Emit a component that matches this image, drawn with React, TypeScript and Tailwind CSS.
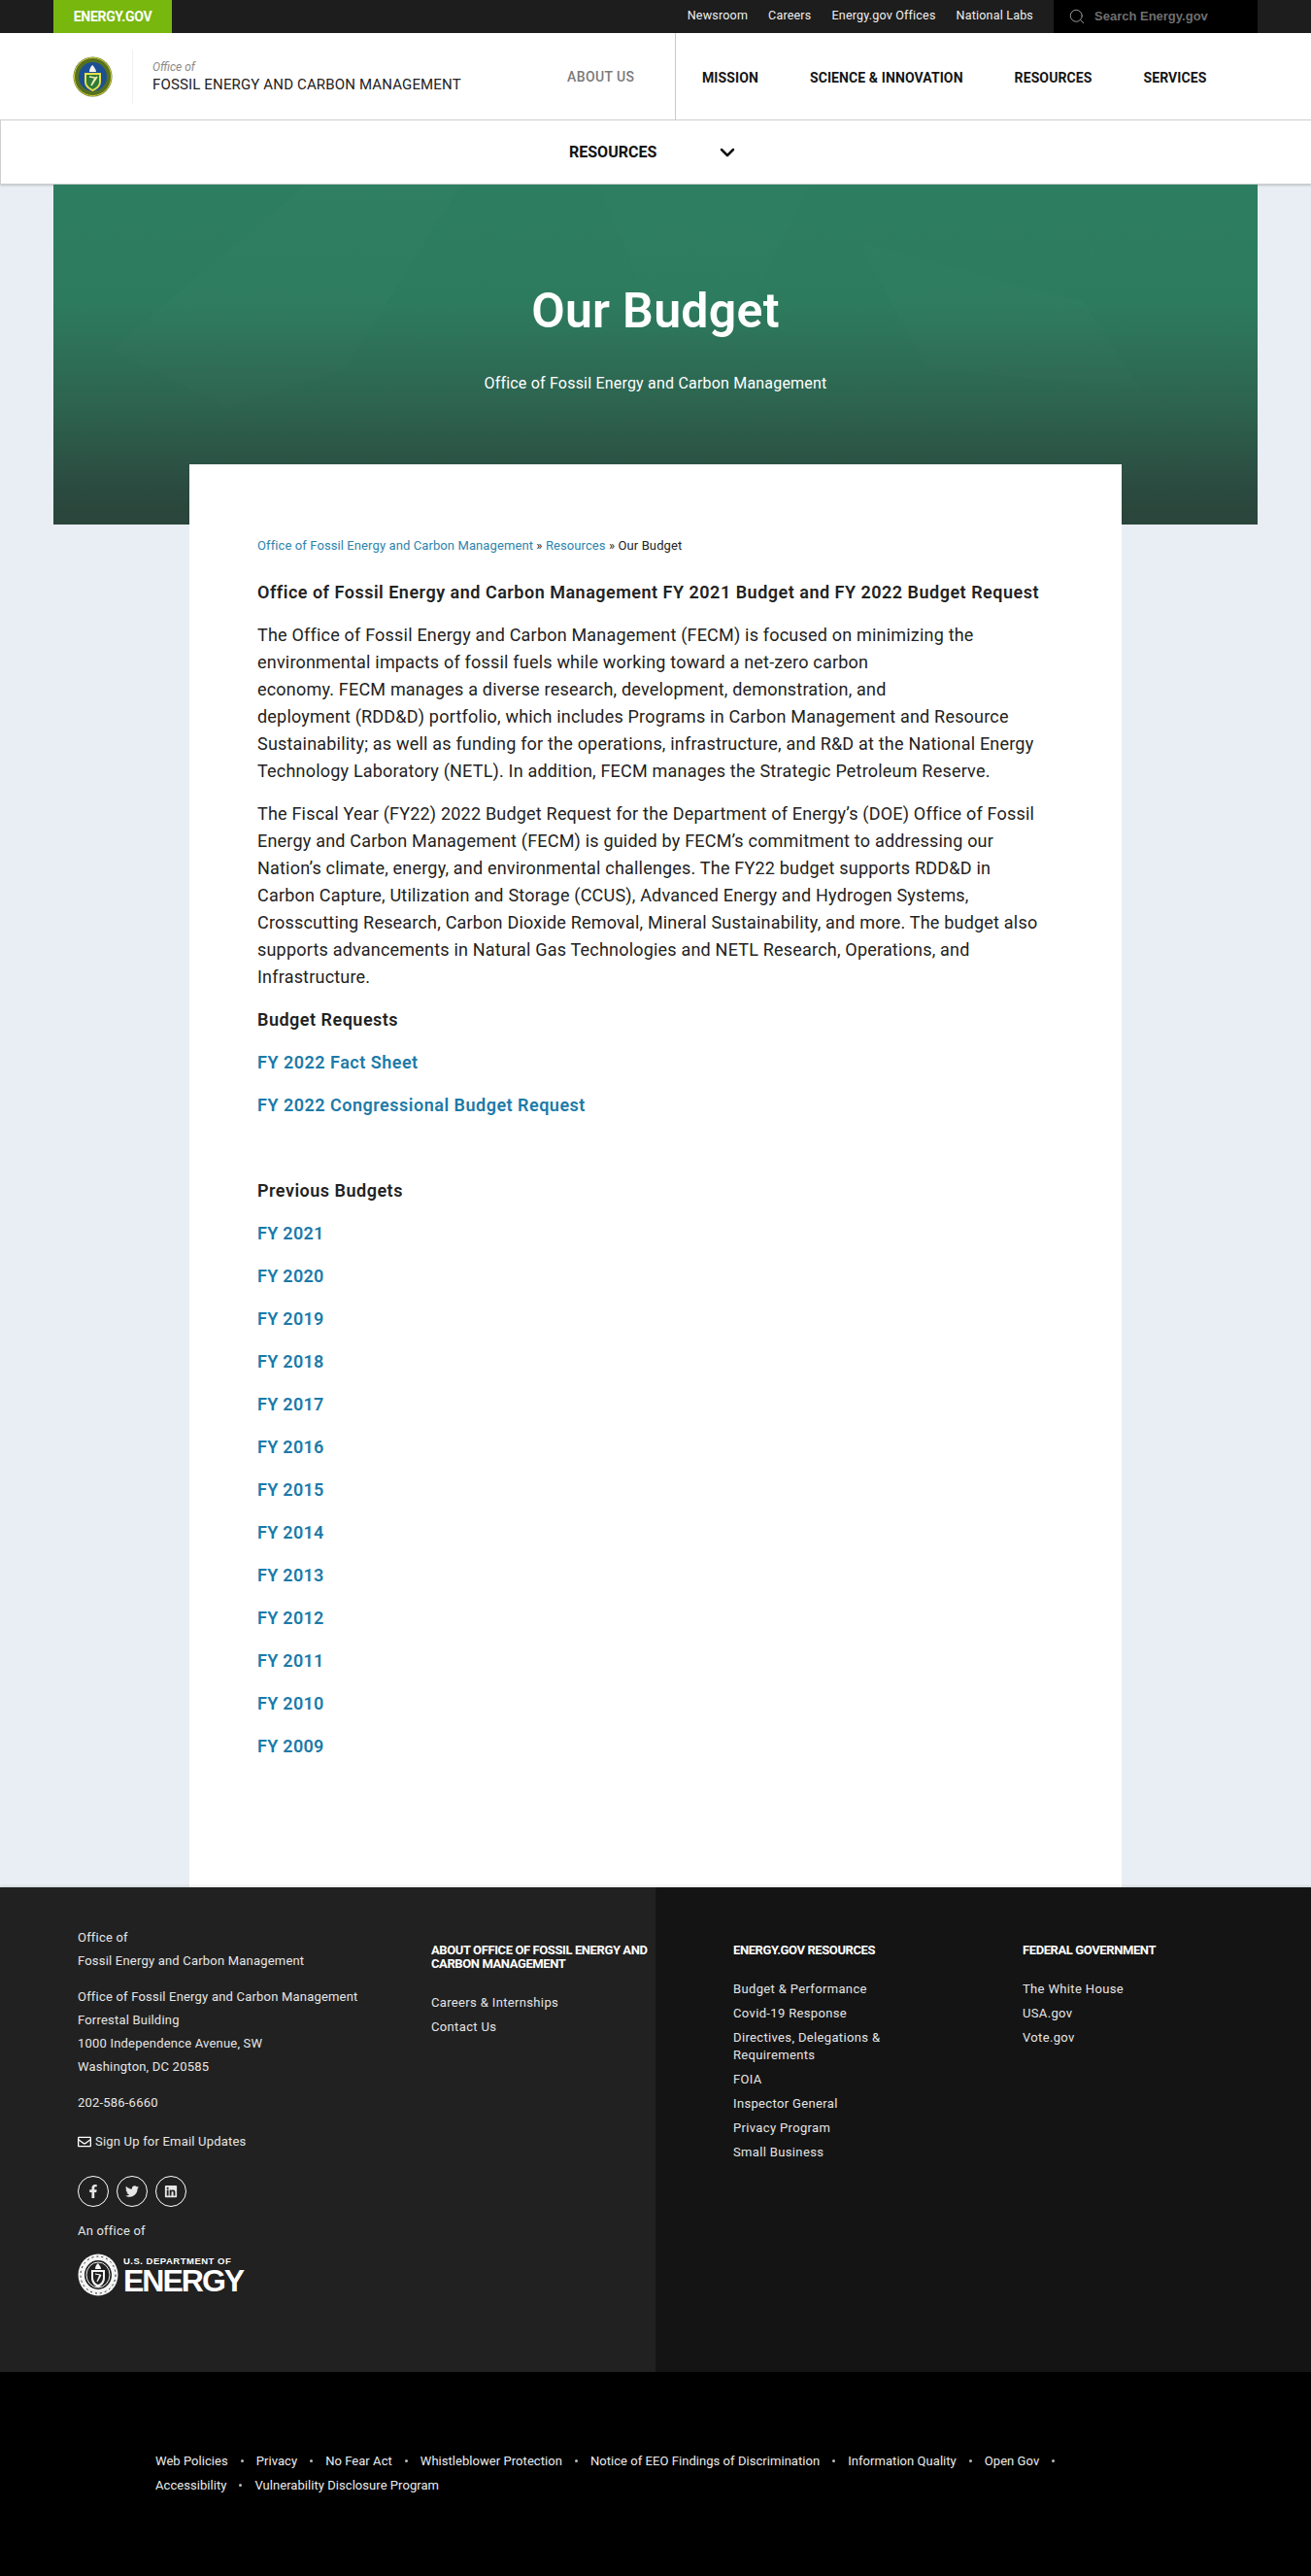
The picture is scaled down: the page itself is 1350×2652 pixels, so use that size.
import React from 'react';
import type { FC } from 'react';
import { ChevronDown, Search } from 'lucide-react';
import { FaFacebookF, FaLinkedin, FaRegEnvelope, FaTwitter } from 'react-icons/fa';

const TOP_LINKS = ['Newsroom', 'Careers', 'Energy.gov Offices', 'National Labs'];
const MAIN_NAV = ['MISSION', 'SCIENCE & INNOVATION', 'RESOURCES', 'SERVICES'];
const YEARS = ['2021', '2020', '2019', '2018', '2017', '2016', '2015', '2014', '2013', '2012', '2011', '2010', '2009'];

const PARA_ONE = [
  'The Office of Fossil Energy and Carbon Management (FECM) is focused on minimizing the',
  'environmental impacts of fossil fuels while working toward a net-zero carbon',
  'economy. FECM manages a diverse research, development, demonstration, and',
  'deployment (RDD&D) portfolio, which includes Programs in Carbon Management and Resource',
  'Sustainability; as well as funding for the operations, infrastructure, and R&D at the National Energy',
  'Technology Laboratory (NETL). In addition, FECM manages the Strategic Petroleum Reserve.',
];
const PARA_TWO = [
  'The Fiscal Year (FY22) 2022 Budget Request for the Department of Energy\u2019s (DOE) Office of Fossil',
  'Energy and Carbon Management (FECM) is guided by FECM\u2019s commitment to addressing our',
  'Nation\u2019s climate, energy, and environmental challenges. The FY22 budget supports RDD&D in',
  'Carbon Capture, Utilization and Storage (CCUS), Advanced Energy and Hydrogen Systems,',
  'Crosscutting Research, Carbon Dioxide Removal, Mineral Sustainability, and more. The budget also',
  'supports advancements in Natural Gas Technologies and NETL Research, Operations, and',
  'Infrastructure.',
];

const RESOURCES = ['Budget & Performance', 'Covid-19 Response', 'Directives, Delegations & Requirements', 'FOIA', 'Inspector General', 'Privacy Program', 'Small Business'];
const FEDERAL = ['The White House', 'USA.gov', 'Vote.gov'];
const LEGAL = ['Web Policies', 'Privacy', 'No Fear Act', 'Whistleblower Protection', 'Notice of EEO Findings of Discrimination', 'Information Quality', 'Open Gov', 'Accessibility', 'Vulnerability Disclosure Program'];

const Seal: FC = () => (
  <svg width="41" height="42" viewBox="0 0 41 42" aria-hidden="true">
    <ellipse cx="20.5" cy="21" rx="20" ry="20.5" fill="#56701f" />
    <ellipse cx="20.5" cy="21" rx="19" ry="19.5" fill="none" stroke="#d6cf3a" strokeWidth="1" />
    <ellipse cx="20.5" cy="21" rx="14.5" ry="15" fill="#1d4f93" />
    <path d="M12 17h17v9c0 5-4 8-8.500 10-4.500-2-8.500-5-8.500-10z" fill="#e9e14a" />
    <path d="M14 19h13v7c0 4-3 6-6.500 8-3.500-2-6.500-4-6.500-8z" fill="#2f7a3a" />
    <path d="M17 21l6 1-4 8 6-9" fill="none" stroke="#f2efb0" strokeWidth="1.500" />
    <path d="M17 16c0-3 1.500-6 3.500-7 1 2 3.500 4 3.500 7z" fill="#f4f4ee" />
  </svg>
);

const WhiteSeal: FC = () => (
  <svg width="42" height="44" viewBox="0 0 42 44" aria-hidden="true">
    <ellipse cx="21" cy="22" rx="20.500" ry="21.500" fill="#f4f4f4" />
    <ellipse cx="21" cy="22" rx="14" ry="15" fill="#1f1f1f" />
    <ellipse cx="21" cy="22" rx="12" ry="13" fill="none" stroke="#f4f4f4" strokeWidth="1" />
    <path d="M14 17h14v8c0 5-3 8-7 10-4-2-7-5-7-10z" fill="#f4f4f4" />
    <path d="M16 19h10v6c0 3-2 6-5 7-3-1-5-4-5-7z" fill="#1f1f1f" />
    <path d="M18 21l5 1-3 7 4-7" fill="none" stroke="#f4f4f4" strokeWidth="1.200" />
    <path d="M18 16c0-3 1.500-5 3-6 1 2 3 3 3 6z" fill="#f4f4f4" />
    <ellipse cx="21" cy="22" rx="18" ry="19" fill="none" stroke="#1f1f1f" strokeWidth="1" strokeDasharray="2 3" />
  </svg>
);

const FooterColumn: FC<{ title: string; items: string[]; className: string }> = ({ title, items, className }) => (
  <div className={className}>
    <h3 className="text-[13px] font-bold uppercase leading-[14px] tracking-[-0.4px] text-white">{title}</h3>
    <ul className="mt-[24px] flex flex-col gap-[7px] text-[13px] leading-[18px] tracking-[0.35px] text-[#e6e6e6]">
      {items.map((item) => (
        <li key={item}>{item}</li>
      ))}
    </ul>
  </div>
);

const App: FC = () => {
  return (
    <div className="w-[1350px] bg-[#e9eef4] font-['Roboto','Liberation_Sans',sans-serif] text-[#222]">
      <div className="flex h-[34px] justify-between bg-[#1d1d1d] pl-[55px] pr-[55px]">
        <a className="flex h-[34px] w-[122px] items-center justify-center bg-[#78b70d] text-[14px] font-bold tracking-[-0.3px] text-white">
          ENERGY.GOV
        </a>
        <div className="flex">
          <ul className="flex gap-[21px] pr-[21px] pt-[7px] text-[12.500px] leading-[18px] tracking-[0.2px] text-[#f0f0f0]">
            {TOP_LINKS.map((link) => (
              <li key={link}>{link}</li>
            ))}
          </ul>
          <div className="flex w-[210px] items-center gap-[9px] bg-black pl-[15px]">
            <Search size={18} strokeWidth={1.25} className="text-[#a0a0a0]" />
            <span className="font-['Liberation_Sans',sans-serif] text-[13px] font-bold text-[#6f6f6f]">Search Energy.gov</span>
          </div>
        </div>
      </div>

      <header className="flex h-[89px] bg-white">
        <div className="flex w-[695px] items-center">
          <div className="ml-[75px] flex h-[56px] items-center border-r border-[#f0f0f0] pr-[20px]">
            <Seal />
          </div>
          <div className="ml-[20px] w-[427px]">
            <div className="text-[12px] italic leading-[16px] text-[#8a8a8a]">Office of</div>
            <div className="text-[15px] leading-[20px] tracking-[0.15px] text-[#222]">FOSSIL ENERGY AND CARBON MANAGEMENT</div>
          </div>
          <span className="pt-[2px] text-[14px] font-medium tracking-[0.4px] text-[#7a7a7a]">ABOUT US</span>
        </div>
        <nav className="flex flex-1 items-center gap-[53px] border-l border-[#c9c9c9] pl-[27px] pt-[3px] text-[14px] font-bold tracking-[0.1px] text-[#151515]">
          {MAIN_NAV.map((item) => (
            <span key={item}>{item}</span>
          ))}
        </nav>
      </header>

      <div className="relative flex h-[67px] items-center border-y border-l border-[#cfcfcf] bg-white pl-[585px] shadow-[0_1px_2px_rgba(0,0,0,0.2)]">
        <span className="text-[16px] font-bold text-[#111]">RESOURCES</span>
        <ChevronDown size={24} strokeWidth={2.5} className="ml-[61px] text-[#111]" />
      </div>

      <section className="relative mx-[55px] h-[350px] bg-[linear-gradient(180deg,#2d7e61_0%,#2d7b5f_35%,#2d634f_65%,#2b4a3f_90%,#2a443a_100%)] pt-[96px] text-center text-white">
        <svg className="absolute inset-0 h-full w-full" viewBox="0 0 1240 350" preserveAspectRatio="none" aria-hidden="true">
          <polygon points="60,170 260,0 420,0 300,190 180,230" fill="#ffffff" opacity="0.012" />
          <polygon points="560,0 780,0 720,120 620,140" fill="#ffffff" opacity="0.008" />
          <polygon points="830,60 1060,120 1120,210 900,190" fill="#ffffff" opacity="0.01" />
        </svg>
        <div className="relative">
          <h1 className="text-[50px] font-semibold leading-[68px] tracking-[0.3px]">Our Budget</h1>
          <p className="mt-[29px] text-[16px] leading-[24px] tracking-[0.2px]">Office of Fossil Energy and Carbon Management</p>
        </div>
      </section>

      <main className="relative mx-[195px] mt-[-62px] bg-white pb-[115px] pl-[70px] pr-[70px] pt-[71px] text-[18px] leading-[28px] tracking-[0.2px]">
        <div className="mb-[21px] text-[13px] leading-[26px] tracking-[0.1px]">
          <a className="text-[#2c84ad]">Office of Fossil Energy and Carbon Management</a> » <a className="text-[#2c84ad]">Resources</a> » Our Budget
        </div>
        <p className="mb-4 font-semibold tracking-[0.5px]">Office of Fossil Energy and Carbon Management FY 2021 Budget and FY 2022 Budget Request</p>
        <p className="mb-4">
          {PARA_ONE.map((line) => (
            <span key={line} className="block whitespace-nowrap">{line}</span>
          ))}
        </p>
        <p className="mb-4">
          {PARA_TWO.map((line) => (
            <span key={line} className="block whitespace-nowrap">{line}</span>
          ))}
        </p>
        <p className="mb-4 font-semibold tracking-[0.5px]">Budget Requests</p>
        <p className="mb-4 font-semibold tracking-[0.5px] text-[#1c7aa8]">FY 2022 Fact Sheet</p>
        <p className="mb-4 font-semibold tracking-[0.5px] text-[#1c7aa8]">FY 2022 Congressional Budget Request</p>
        <p className="mb-4">&nbsp;</p>
        <p className="mb-4 font-semibold tracking-[0.5px]">Previous Budgets</p>
        {YEARS.map((year) => (
          <p key={year} className="mb-4 font-semibold tracking-[0.3px] text-[#1c7aa8]">FY {year}</p>
        ))}
      </main>

      <footer className="relative grid h-[499px] grid-cols-2 text-white shadow-[0_-2px_2px_rgba(0,0,0,0.08)]">
        <div className="flex bg-[#212121] pl-[80px] pt-[40px]">
          <div className="w-[364px] text-[13px] leading-[24px] tracking-[0.2px] text-[#e6e6e6]">
            <p>Office of<br />Fossil Energy and Carbon Management</p>
            <p className="mt-[13px]">
              Office of Fossil Energy and Carbon Management<br />
              Forrestal Building<br />
              1000 Independence Avenue, SW<br />
              Washington, DC 20585
            </p>
            <p className="mt-[13px]">202-586-6660</p>
            <p className="mt-[16px] flex items-center gap-[4px]">
              <FaRegEnvelope size={14} className="text-white" />
              Sign Up for Email Updates
            </p>
            <div className="mt-[23px] flex gap-[8px]">
              <span className="flex h-[32px] w-[32px] items-center justify-center rounded-full border border-white"><FaFacebookF size={14} /></span>
              <span className="flex h-[32px] w-[32px] items-center justify-center rounded-full border border-white"><FaTwitter size={14} /></span>
              <span className="flex h-[32px] w-[32px] items-center justify-center rounded-full border border-white"><FaLinkedin size={14} /></span>
            </div>
            <p className="mt-[13px]">An office of</p>
            <div className="mt-[11px] flex items-center gap-[5px]">
              <WhiteSeal />
              <div className="font-['Liberation_Sans',sans-serif] font-bold text-white">
                <div className="text-[9.500px] leading-[12px] tracking-[0.5px]">U.S. DEPARTMENT OF</div>
                <div className="text-[32px] leading-[28px] tracking-[-2px]">ENERGY</div>
              </div>
            </div>
          </div>
          <div className="w-[225px] pt-[18px]">
            <h3 className="text-[13px] font-bold uppercase leading-[14px] tracking-[-0.4px] text-white">About Office of Fossil Energy and Carbon Management</h3>
            <ul className="mt-[24px] flex flex-col gap-[7px] text-[13px] leading-[18px] tracking-[0.35px] text-[#e6e6e6]">
              <li>Careers &amp; Internships</li>
              <li>Contact Us</li>
            </ul>
          </div>
        </div>
        <div className="flex bg-[#141414] pl-[80px] pt-[58px]">
          <FooterColumn title="Energy.gov Resources" items={RESOURCES} className="w-[298px] pr-[130px]" />
          <FooterColumn title="Federal Government" items={FEDERAL} className="w-[200px]" />
        </div>
      </footer>

      <div className="h-[210px] bg-black pl-[160px] pr-[150px] pt-[79px]">
        <ul className="flex flex-wrap text-[13px] leading-[25px] tracking-[0.05px] text-[#ececec]">
          {LEGAL.map((item, index) => (
            <li key={item} className="flex items-center">
              {item}
              {index < LEGAL.length - 1 && <span className="mx-[13px] h-[3px] w-[3px] rounded-full bg-[#bbb]" />}
            </li>
          ))}
        </ul>
      </div>
    </div>
  );
};

export default App;
